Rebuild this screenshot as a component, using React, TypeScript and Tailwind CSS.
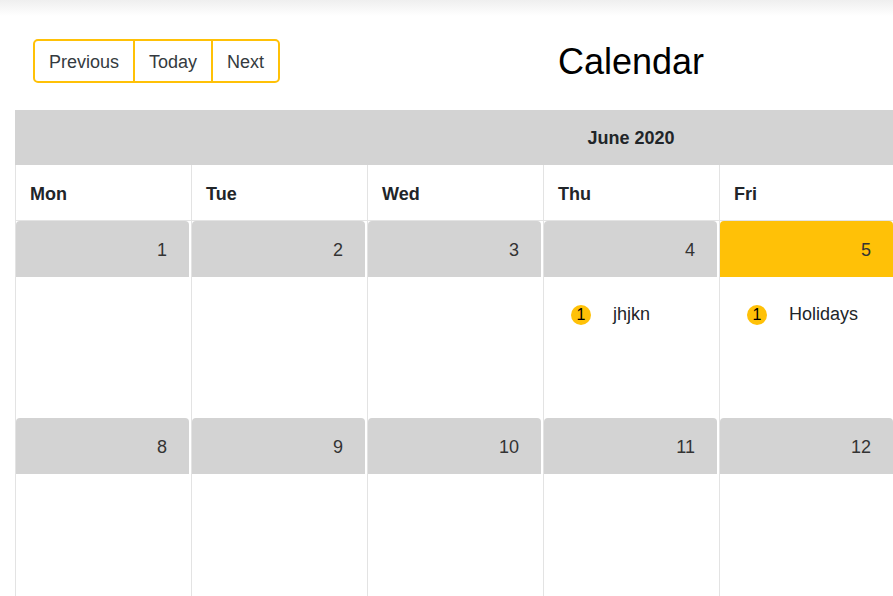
import React from "react";

const days = ["Mon", "Tue", "Wed", "Thu", "Fri", "Sat", "Sun"];
const weeks = [
  [1, 2, 3, 4, 5, 6, 7],
  [8, 9, 10, 11, 12, 13, 14],
];
const events: Record<number, string> = { 4: "jhjkn", 5: "Holidays" };

export default function App() {
  return (
    <div
      className="w-[893px] h-[596px] overflow-hidden bg-white relative"
      style={{ fontFamily: '"Liberation Sans", Arial, sans-serif' }}
    >
      <div className="h-[16px] bg-gradient-to-b from-[#efefef] to-white" />
      <div className="w-[1262px]">
        <div className="relative h-[94px] pl-[33px] pt-[23px]">
          <div className="inline-flex h-[44px] border-2 border-[#ffc107] rounded-[5px] text-[18px] text-[#343a40]">
            <div className="flex items-center px-[14px] pt-[2px]">Previous</div>
            <div className="flex items-center px-[14px] pt-[2px] border-l-2 border-[#ffc107]">Today</div>
            <div className="flex items-center px-[14px] pt-[2px] border-l-2 border-[#ffc107]">Next</div>
          </div>
          <div className="absolute left-0 right-0 top-[25px] text-center text-[36px] leading-[42px] text-black">
            Calendar
          </div>
        </div>
        <div className="ml-[15px] w-[1232px]">
          <div className="h-[55px] bg-[#d3d3d3] flex items-center justify-center pt-[2px] font-bold text-[18px] text-[#212529]">
            June 2020
          </div>
          <div className="grid grid-cols-[repeat(7,176px)] border-l border-[#e3e3e3]">
            {days.map((d) => (
              <div
                key={d}
                className="h-[56px] border-r border-b border-[#e3e3e3] flex items-center pl-[14px] pt-[4px] font-bold text-[18px] text-[#212529]"
              >
                {d}
              </div>
            ))}
          </div>
          {weeks.map((w, wi) => (
            <div key={wi} className="grid grid-cols-[repeat(7,176px)] border-l border-[#e3e3e3]">
              {w.map((n) => {
                const today = n === 5;
                return (
                  <div key={n} className="border-r border-[#e3e3e3] flex flex-col">
                    <div
                      className={`h-[56px] ml-[0px] mr-[2px] rounded-t-[4px] flex items-center justify-end pr-[22px] pt-[2px] text-[18px] text-[#333] ${
                        today ? "bg-[#ffc107]" : "bg-[#d3d3d3]"
                      }`}
                    >
                      {n}
                    </div>
                    <div className="h-[141px] relative">
                      {events[n] && (
                        <div className="absolute top-[24px] left-[27px] flex items-center">
                          <span className="w-[20px] h-[20px] rounded-full bg-[#ffc107] flex items-center justify-center text-[16px] text-black leading-none">
                            1
                          </span>
                          <span className="ml-[22px] text-[18px] text-[#212529]">{events[n]}</span>
                        </div>
                      )}
                    </div>
                  </div>
                );
              })}
            </div>
          ))}
        </div>
      </div>
    </div>
  );
}
